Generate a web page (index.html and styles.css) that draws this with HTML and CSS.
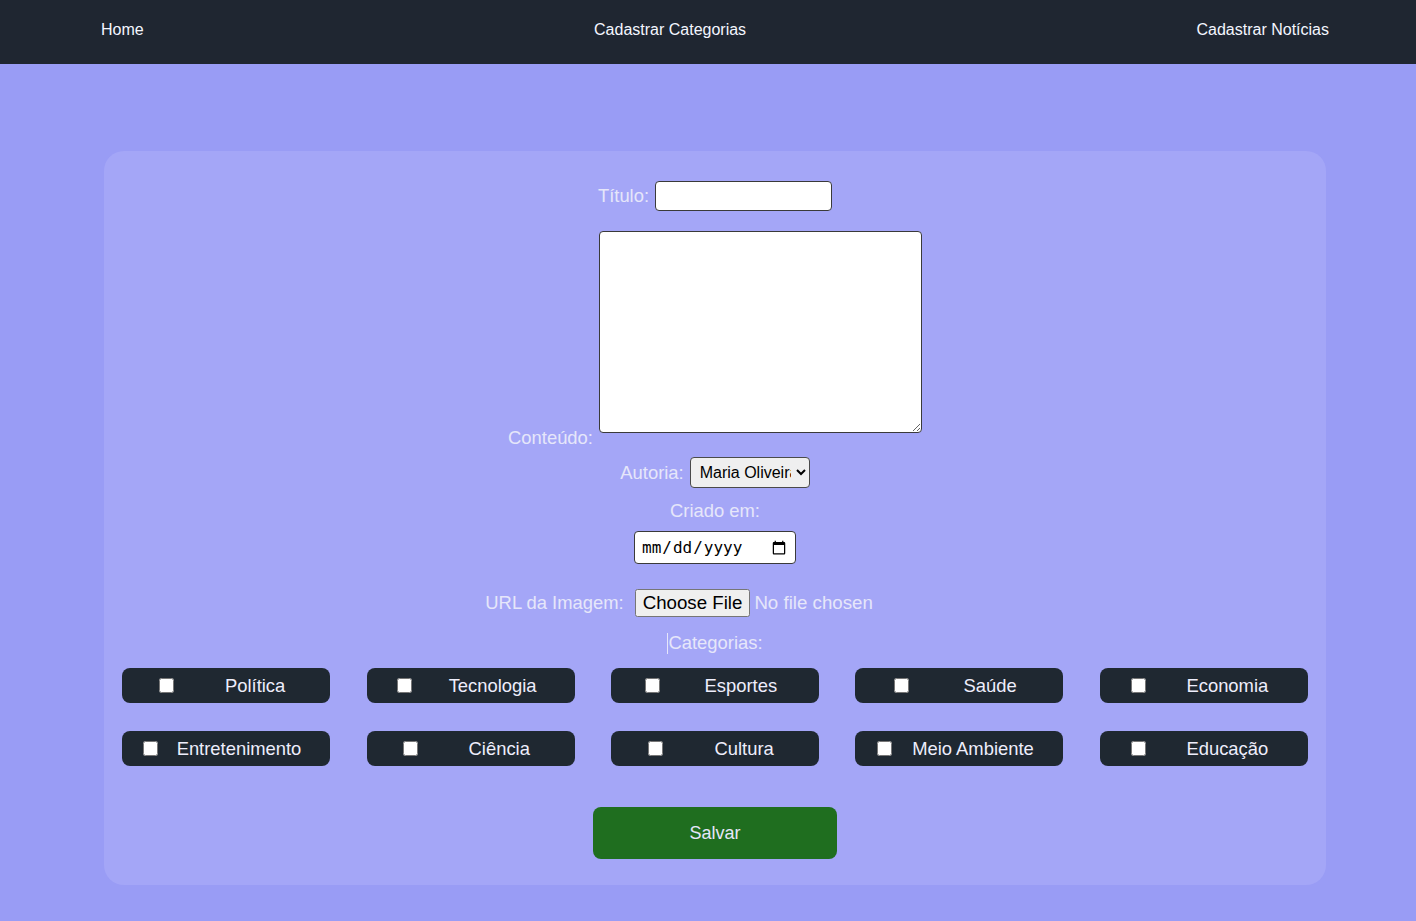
FILE: index.html
```html
<!DOCTYPE html>
<html lang="pt-BR">
<head>
<meta charset="utf-8">
<title>Cadastrar Notícias</title>
<link rel="stylesheet" href="styles.css">
</head>
<body>
<nav class="topnav">
  <a class="navlink" href="#">Home</a>
  <a class="navlink" href="#">Cadastrar Categorias</a>
  <a class="navlink" href="#">Cadastrar Notícias</a>
</nav>
<main class="page">
  <form class="card">
    <div class="row row-titulo">
      <label class="lbl" for="titulo">Título:</label>
      <input class="txt" id="titulo" type="text">
    </div>
    <div class="row row-conteudo">
      <label class="lbl lbl-conteudo" for="conteudo">Conteúdo:</label>
      <textarea class="area" id="conteudo"></textarea>
    </div>
    <div class="row row-autoria">
      <label class="lbl" for="autoria">Autoria:</label>
      <select class="sel" id="autoria">
        <option>Maria Oliveira</option>
        <option>João Silva</option>
      </select>
    </div>
    <div class="row row-criado">
      <label class="lbl" for="criado">Criado em:</label>
    </div>
    <div class="row row-date">
      <input class="date" id="criado" type="date">
    </div>
    <div class="row row-url">
      <label class="lbl" for="imagem">URL da Imagem:</label>
      <input class="file" id="imagem" type="file">
    </div>
    <div class="row row-cat">
      <span class="caret"></span><span class="lbl">Categorias:</span>
    </div>
    <div class="cats">
      <label class="chip"><input type="checkbox" class="cb"><span class="chiptext">Política</span></label>
      <label class="chip"><input type="checkbox" class="cb"><span class="chiptext">Tecnologia</span></label>
      <label class="chip"><input type="checkbox" class="cb"><span class="chiptext">Esportes</span></label>
      <label class="chip"><input type="checkbox" class="cb"><span class="chiptext">Saúde</span></label>
      <label class="chip"><input type="checkbox" class="cb"><span class="chiptext">Economia</span></label>
      <label class="chip"><input type="checkbox" class="cb"><span class="chiptext">Entretenimento</span></label>
      <label class="chip"><input type="checkbox" class="cb"><span class="chiptext">Ciência</span></label>
      <label class="chip"><input type="checkbox" class="cb"><span class="chiptext">Cultura</span></label>
      <label class="chip"><input type="checkbox" class="cb"><span class="chiptext">Meio Ambiente</span></label>
      <label class="chip"><input type="checkbox" class="cb"><span class="chiptext">Educação</span></label>
    </div>
    <div class="row row-save">
      <button type="button" class="save">Salvar</button>
    </div>
  </form>
</main>
</body>
</html>
```
FILE: styles.css
```css
html, body {
  margin: 0;
  padding: 0;
}
body {
  background: #999cf5;
  font-family: "Liberation Sans", Arial, sans-serif;
  min-height: 921px;
}
.topnav {
  box-sizing: border-box;
  height: 64px;
  background: #1f2631;
  display: flex;
  justify-content: space-between;
  align-items: flex-start;
  padding: 21px 87px 0 101px;
}
.navlink {
  color: #f4f6ff;
  text-decoration: none;
  font-size: 16px;
  line-height: 18px;
}
.page {
  padding: 87px 90px 36px 104px;
}
.card {
  box-sizing: border-box;
  width: 1222px;
  height: 734px;
  background: #a4a6f7;
  border-radius: 20px;
  padding-top: 30px;
  display: flex;
  flex-direction: column;
  align-items: center;
}
.row {
  width: 100%;
  display: flex;
  justify-content: center;
  align-items: center;
  gap: 6px;
}
.lbl {
  color: #e6e6fa;
  font-size: 18.4px;
  line-height: 22px;
}
.txt {
  box-sizing: border-box;
  width: 177px;
  height: 30px;
  border: 1px solid #3a3a3a;
  border-radius: 4px;
  background: #fff;
  margin: 0;
  font-size: 16px;
}
.row-conteudo {
  margin-top: 20px;
  align-items: flex-end;
}
.lbl-conteudo {
  margin-bottom: -16px;
}
.area {
  box-sizing: border-box;
  width: 323px;
  height: 202px;
  border: 1px solid #3a3a3a;
  border-radius: 4px;
  background: #fff;
  margin: 0;
  font-family: "Liberation Mono", monospace;
}
.row-autoria {
  margin-top: 24px;
}
.sel {
  box-sizing: border-box;
  width: 120px;
  height: 31px;
  font-family: "Liberation Sans", Arial, sans-serif;
  font-size: 16px;
  color: #000;
  background-color: #efefef;
  border: 1px solid #4a4a4a;
  border-radius: 4px;
  padding: 0 2px 0 5px;
  margin: 0;
}
.row-criado {
  margin-top: 12px;
}
.row-date {
  margin-top: 9px;
}
.date {
  box-sizing: border-box;
  width: 162px;
  height: 33px;
  font-family: "DejaVu Sans Mono", monospace;
  font-size: 16px;
  border: 1px solid #3a3a3a;
  border-radius: 4px;
  background: #fff;
  padding: 0 6px;
  margin: 0;
}
.row-url {
  margin-top: 25px;
}
.file {
  box-sizing: border-box;
  width: 310px;
  font-family: "Liberation Sans", Arial, sans-serif;
  font-size: 18.7px;
  color: #e6e6fa;
  margin: 0 0 0 5px;
}
.row-cat {
  margin-top: 15px;
  gap: 0;
}
.caret {
  display: inline-block;
  width: 1px;
  height: 21px;
  background: #e6e6fa;
}
.cats {
  margin-top: 14px;
  width: 100%;
  display: grid;
  grid-template-columns: repeat(5, 1fr);
  row-gap: 28px;
  justify-items: center;
}
.chip {
  box-sizing: border-box;
  width: 208px;
  height: 35px;
  background: #1f2831;
  border-radius: 8px;
  display: flex;
  align-items: center;
  justify-content: space-around;
  padding: 0 17px 0 13px;
}
.cb {
  width: 15px;
  height: 15px;
  margin: 3px 3px 3px 4px;
}
.chiptext {
  color: #eeeefc;
  font-size: 18.4px;
  padding: 0 8px;
}
.row-save {
  margin-top: 41px;
}
.save {
  width: 244px;
  height: 52px;
  border: none;
  border-radius: 8px;
  background: #1f6e1f;
  color: #e6e6fa;
  font-family: "Liberation Sans", Arial, sans-serif;
  font-size: 18px;
}
```
